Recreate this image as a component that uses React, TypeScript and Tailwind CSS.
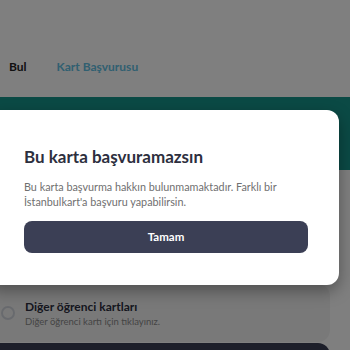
import React from "react";

function StudentCardOption() {
  return (
    <div className="flex items-center gap-[10px] bg-[#f3f3f3] rounded-r-xl w-[330px] h-[58px] pl-[1px]">
      <div className="w-[14px] h-[14px] rounded-full border-2 border-gray-300 shrink-0" />
      <div className="flex flex-col gap-[2px]">
        <span className="text-[12px] font-bold text-[#2d2f3e] leading-[15px]">Diğer öğrenci kartları</span>
        <span className="text-[9.5px] text-[#8a8a8a] leading-[12px]">Diğer öğrenci kartı için tıklayınız.</span>
      </div>
    </div>
  );
}

export default function App() {
  return (
    <div
      className="relative w-[350px] h-[350px] overflow-hidden bg-white"
      style={{ fontFamily: "Lato, 'Noto Sans', sans-serif" }}
    >
      {/* page underneath */}
      <div className="bg-white h-[97px] flex items-end pb-[21px] pl-[9px] gap-[30px]">
        <span className="text-[12px] font-bold text-[#222]">Bul</span>
        <span className="text-[12px] font-bold text-[#62c0e2]">Kart Başvurusu</span>
      </div>
      <div className="bg-[#16948a] h-[73px]" />
      <div className="pt-[114px]">
        <StudentCardOption />
      </div>
      <div className="mt-[1px] bg-[#3b3f55] w-[330px] h-[30px] rounded-tr-xl" />

      {/* backdrop */}
      <div className="absolute inset-0 bg-black/50" />

      {/* modal */}
      <div className="absolute left-[-12px] top-[110px] w-[351px] h-[175px] bg-white rounded-xl shadow-[0_6px_16px_rgba(0,0,0,0.35)] pl-[36px] pr-[31px] pt-[37px]">
        <h2 className="text-[17px] font-bold text-[#2d2f3e] leading-[20px]">Bu karta başvuramazsın</h2>
        <p className="mt-[12px] text-[10.8px] text-[#707070] leading-[15px]">
          Bu karta başvurma hakkın bulunmamaktadır. Farklı bir İstanbulkart'a başvuru yapabilirsin.
        </p>
        <button className="mt-[12px] w-[284px] h-[32px] rounded-lg bg-[#3b3f55] text-white text-[11.5px] font-bold">
          Tamam
        </button>
      </div>
    </div>
  );
}
